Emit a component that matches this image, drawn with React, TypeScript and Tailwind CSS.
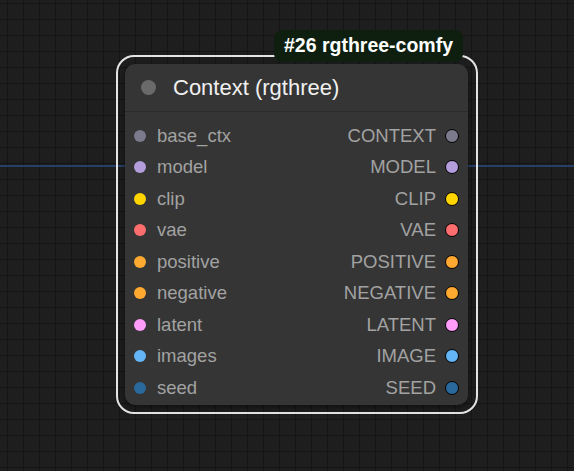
const slots = [
  { input: 'base_ctx', output: 'CONTEXT', color: '#7a7a8c' },
  { input: 'model', output: 'MODEL', color: '#b39ddb' },
  { input: 'clip', output: 'CLIP', color: '#ffd500' },
  { input: 'vae', output: 'VAE', color: '#ff6e6e' },
  { input: 'positive', output: 'POSITIVE', color: '#ffa931' },
  { input: 'negative', output: 'NEGATIVE', color: '#ffa931' },
  { input: 'latent', output: 'LATENT', color: '#ff9cf9' },
  { input: 'images', output: 'IMAGE', color: '#64b5f6' },
  { input: 'seed', output: 'SEED', color: '#29699c' },
];

export default function App() {
  return (
    <div
      className="relative w-[574px] h-[471px] overflow-hidden bg-[#1e1e1e] bg-[linear-gradient(to_right,#151515_1px,transparent_1px),linear-gradient(to_bottom,#151515_1px,transparent_1px)] bg-[size:16px_16px] bg-[position:7px_3px]"
      style={{ fontFamily: '"Liberation Sans", Arial, sans-serif' }}
    >
      {/* link passing behind the node */}
      <div className="absolute left-0 right-0 top-[165px] h-[2px] bg-[#263f68]" />

      {/* selection outline */}
      <div className="absolute left-[116px] top-[55px] w-[362px] h-[359px] rounded-[18px] border-2 border-[#e4e4e4]" />

      {/* node */}
      <div className="absolute left-[125px] top-[64px] w-[343px] h-[341px] rounded-[10px] bg-[#353535] shadow-[0_2px_6px_rgba(0,0,0,0.5)] overflow-hidden">
        <div className="flex items-center h-[48px] border-b border-[#2a2a2a] pl-[16px]">
          <span className="w-[15px] h-[15px] rounded-full bg-[#6a6a6a]" />
          <span className="ml-[17px] text-[22px] leading-none text-[#f0f0f0]">Context (rgthree)</span>
        </div>
        <div className="flex flex-col pt-[8px]">
          {slots.map((s) => (
            <div key={s.input} className="flex items-center justify-between h-[31.5px] text-[18.5px] leading-none text-[#a2a2a2]">
              <div className="flex items-center pl-[9px]">
                <span className="w-[12px] h-[12px] rounded-full" style={{ backgroundColor: s.color }} />
                <span className="ml-[11px]">{s.input}</span>
              </div>
              <div className="flex items-center pr-[9px]">
                <span className="mr-[9px]">{s.output}</span>
                <span className="w-[14px] h-[14px] rounded-full border border-black" style={{ backgroundColor: s.color }} />
              </div>
            </div>
          ))}
        </div>
      </div>

      {/* badge */}
      <div className="absolute left-[274px] top-[30px] w-[189px] h-[32px] rounded-[8px] bg-[#0e1f10] flex items-center justify-center text-[19.5px] font-bold leading-none text-white">
        #26 rgthree-comfy
      </div>
    </div>
  );
}
